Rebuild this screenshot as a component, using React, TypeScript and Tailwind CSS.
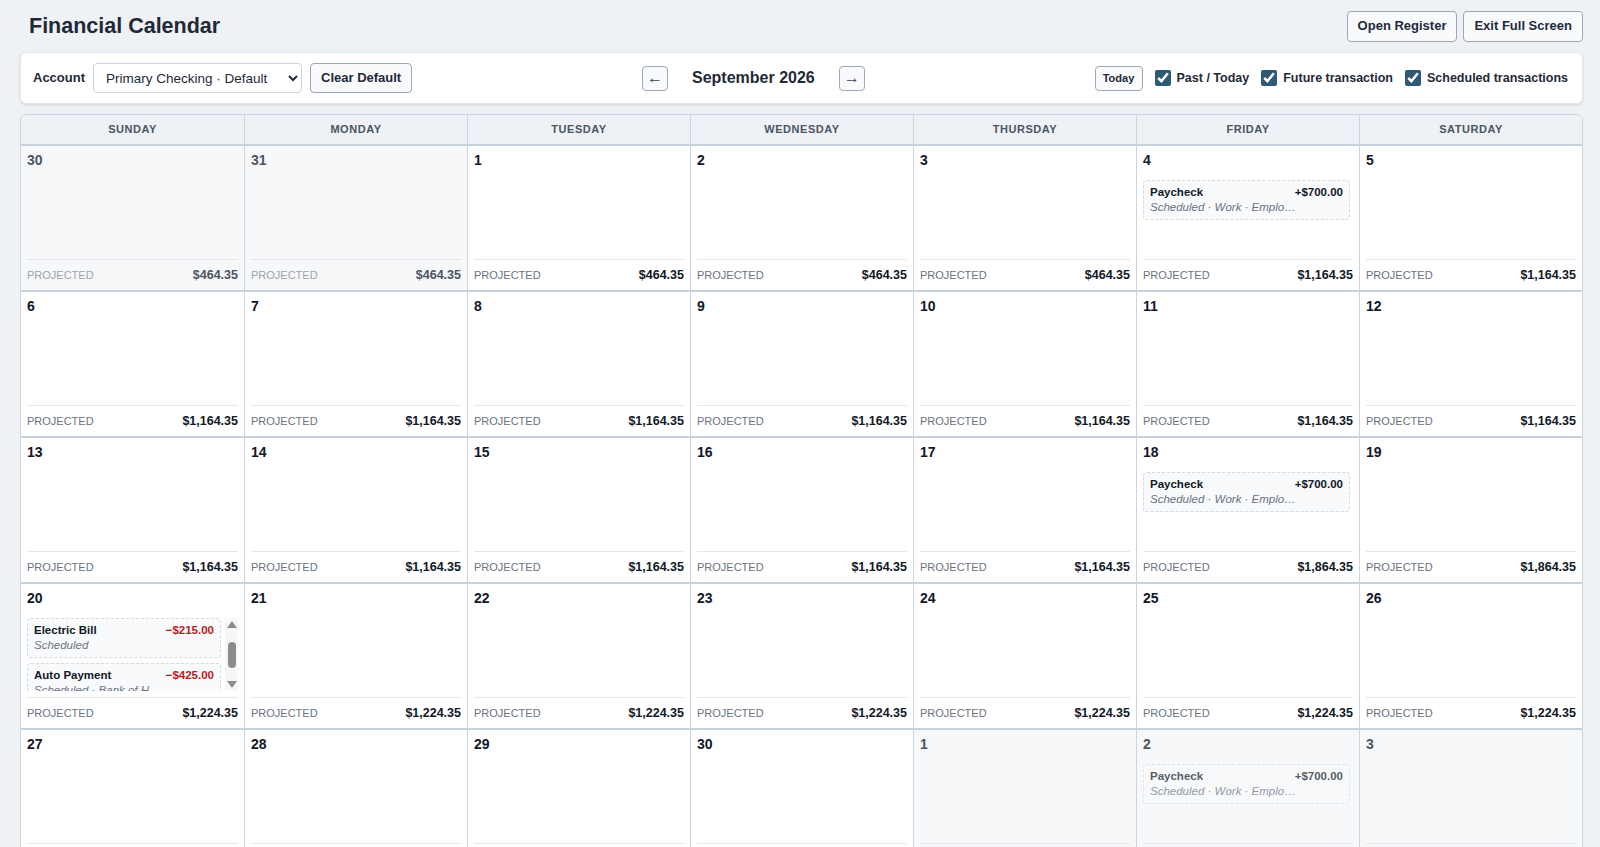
import clsx from "clsx"

type Txn = { title: string; amount: string; sub: string; negative?: boolean }
type Day = { n: number; out?: boolean; bal: string; txns?: Txn[]; scroll?: boolean }

const paycheck: Txn = { title: "Paycheck", amount: "+$700.00", sub: "Scheduled · Work · Emplo…" }

const weeks: Day[][] = [
  [
    { n: 30, out: true, bal: "$464.35" },
    { n: 31, out: true, bal: "$464.35" },
    { n: 1, bal: "$464.35" },
    { n: 2, bal: "$464.35" },
    { n: 3, bal: "$464.35" },
    { n: 4, bal: "$1,164.35", txns: [paycheck] },
    { n: 5, bal: "$1,164.35" },
  ],
  [6, 7, 8, 9, 10, 11, 12].map((n) => ({ n, bal: "$1,164.35" })),
  [
    { n: 13, bal: "$1,164.35" },
    { n: 14, bal: "$1,164.35" },
    { n: 15, bal: "$1,164.35" },
    { n: 16, bal: "$1,164.35" },
    { n: 17, bal: "$1,164.35" },
    { n: 18, bal: "$1,864.35", txns: [paycheck] },
    { n: 19, bal: "$1,864.35" },
  ],
  [
    {
      n: 20,
      bal: "$1,224.35",
      scroll: true,
      txns: [
        { title: "Electric Bill", amount: "−$215.00", sub: "Scheduled", negative: true },
        { title: "Auto Payment", amount: "−$425.00", sub: "Scheduled · Bank of H…", negative: true },
      ],
    },
    { n: 21, bal: "$1,224.35" },
    { n: 22, bal: "$1,224.35" },
    { n: 23, bal: "$1,224.35" },
    { n: 24, bal: "$1,224.35" },
    { n: 25, bal: "$1,224.35" },
    { n: 26, bal: "$1,224.35" },
  ],
  [
    { n: 27, bal: "$1,224.35" },
    { n: 28, bal: "$1,224.35" },
    { n: 29, bal: "$1,224.35" },
    { n: 30, bal: "$1,224.35" },
    { n: 1, out: true, bal: "$1,224.35" },
    { n: 2, out: true, bal: "$1,924.35", txns: [paycheck] },
    { n: 3, out: true, bal: "$1,924.35" },
  ],
]

const weekdays = ["Sunday", "Monday", "Tuesday", "Wednesday", "Thursday", "Friday", "Saturday"]

function TxnCard({ t, out }: { t: Txn; out?: boolean }) {
  return (
    <div
      className={clsx(
        "rounded-[4px] border border-dashed border-[#d5dbe2] bg-[#f8fafc] px-1.5 py-1",
        out && "opacity-70"
      )}
    >
      <div className="flex items-center justify-between text-[11.5px] font-bold leading-[15px]">
        <span className="text-[#111827]">{t.title}</span>
        <span className={t.negative ? "text-[#b91c1c]" : "text-[#111827]"}>{t.amount}</span>
      </div>
      <div className="truncate text-[11.5px] italic leading-[15px] text-[#6b7280]">{t.sub}</div>
    </div>
  )
}

// classic scrollbar look for the overflowing day list
function FakeScrollbar() {
  return (
    <div className="ml-[4px] flex w-[13px] shrink-0 flex-col items-center justify-between bg-[#f7f7f7] py-[3px]">
      <svg width="10" height="7" viewBox="0 0 10 7">
        <path d="M5 0 L10 7 L0 7 Z" fill="#8c8c8c" />
      </svg>
      <div className="h-[26px] w-[8px] rounded-full bg-[#8c8c8c]" />
      <svg width="10" height="7" viewBox="0 0 10 7">
        <path d="M0 0 L10 0 L5 7 Z" fill="#8c8c8c" />
      </svg>
    </div>
  )
}

function DayCell({ day, first }: { day: Day; first: boolean }) {
  return (
    <div
      className={clsx(
        "flex h-[144px] min-w-0 flex-col px-1.5 pt-1.5",
        !first && "border-l border-[#cbd5e1]",
        day.out ? "bg-[#f6f8fa]" : "bg-white"
      )}
    >
      <div className={clsx("text-sm font-bold leading-4", day.out ? "text-[#4b5563]" : "text-[#111827]")}>
        {day.n}
      </div>
      <div className="mt-3 mb-1.5 flex min-h-0 flex-1">
        <div className={clsx("min-w-0 flex-1 overflow-hidden", !day.scroll && "pr-[3px]")}>
          <div className="flex flex-col gap-[5px]">
            {day.txns?.map((t, i) => <TxnCard key={i} t={t} out={day.out} />)}
          </div>
        </div>
        {day.scroll && <FakeScrollbar />}
      </div>
      <div className="flex h-[31px] shrink-0 items-center justify-between border-t border-[#e5e7eb]">
        <span className={clsx("text-[11px] uppercase", day.out ? "text-[#9ca3af]" : "text-[#6b7280]")}>
          Projected
        </span>
        <span className={clsx("text-[12.5px] font-bold", day.out ? "text-[#4b5563]" : "text-[#111827]")}>
          {day.bal}
        </span>
      </div>
    </div>
  )
}

export default function App() {
  return (
    <div
      className="h-[847px] overflow-hidden bg-[#eef2f5] pl-5 pr-[17px] text-[#1e293b]"
      style={{ fontFamily: '"Liberation Sans", Arial, sans-serif' }}
    >
      {/* Title bar */}
      <div className="flex h-[52px] items-center justify-between">
        <h1 className="pl-[9px] text-[21.5px] font-bold text-[#1f2937]">Financial Calendar</h1>
        <div className="flex items-center gap-1.5">
          <button className="h-[31px] rounded-[4px] border border-[#9aa8b7] bg-[#f8fafc] px-2.5 text-[13px] font-bold text-[#1e293b]">
            Open Register
          </button>
          <button className="h-[31px] rounded-[4px] border border-[#9aa8b7] bg-[#f8fafc] px-2.5 text-[13px] font-bold text-[#1e293b]">
            Exit Full Screen
          </button>
        </div>
      </div>

      {/* Toolbar */}
      <div className="flex h-[52px] items-center rounded-md border border-[#e2e8f0] bg-white pl-3 pr-3.5 shadow-sm">
        <div className="flex items-center">
          <span className="text-[13px] font-bold text-[#1f2937]">Account</span>
          <select className="ml-2 h-[30px] w-[209px] rounded-[4px] border border-[#cbd5e1] bg-white pl-2 text-[13.5px] text-[#1f2937]">
            <option>Primary Checking · Default</option>
          </select>
          <button className="ml-2 h-[30px] rounded-[4px] border border-[#9aa8b7] bg-[#f8fafc] px-2.5 text-[13px] font-bold text-[#1e293b]">
            Clear Default
          </button>
        </div>

        <div className="flex flex-1 items-center justify-center gap-6">
          <button className="flex h-[25px] w-[26px] items-center justify-center rounded-[4px] border border-[#9aa8b7] bg-[#f8fafc] text-base leading-none text-[#334155]">
            ←
          </button>
          <span className="text-base font-bold text-[#1f2937]">September 2026</span>
          <button className="flex h-[25px] w-[26px] items-center justify-center rounded-[4px] border border-[#9aa8b7] bg-[#f8fafc] text-base leading-none text-[#334155]">
            →
          </button>
        </div>

        <div className="flex items-center">
          <button className="h-[25px] w-[48px] rounded-[4px] border border-[#9aa8b7] bg-[#f8fafc] text-[11px] font-bold text-[#1e293b]">
            Today
          </button>
          {["Past / Today", "Future transaction", "Scheduled transactions"].map((label) => (
            <label key={label} className="ml-3 flex items-center gap-1.5 text-[12.5px] font-bold text-[#1f2937]">
              <input type="checkbox" defaultChecked className="m-0 h-4 w-4 accent-[#2f5a75]" />
              {label}
            </label>
          ))}
        </div>
      </div>

      {/* Calendar grid */}
      <div className="mt-[10px] overflow-hidden rounded-t-md border border-[#cbd5e1]">
        <div className="grid h-[31px] grid-cols-7 border-b-2 border-[#c8d2dc] bg-[#eef2f6]">
          {weekdays.map((d, i) => (
            <div
              key={d}
              className={clsx(
                "flex items-center justify-center text-[11px] font-bold uppercase tracking-wider text-[#4b5563]",
                i > 0 && "border-l border-[#cbd5e1]"
              )}
            >
              {d}
            </div>
          ))}
        </div>
        {weeks.map((week, wi) => (
          <div key={wi} className="grid grid-cols-7 border-b-2 border-[#c8d2dc]">
            {week.map((day, di) => (
              <DayCell key={di} day={day} first={di === 0} />
            ))}
          </div>
        ))}
      </div>
    </div>
  )
}
